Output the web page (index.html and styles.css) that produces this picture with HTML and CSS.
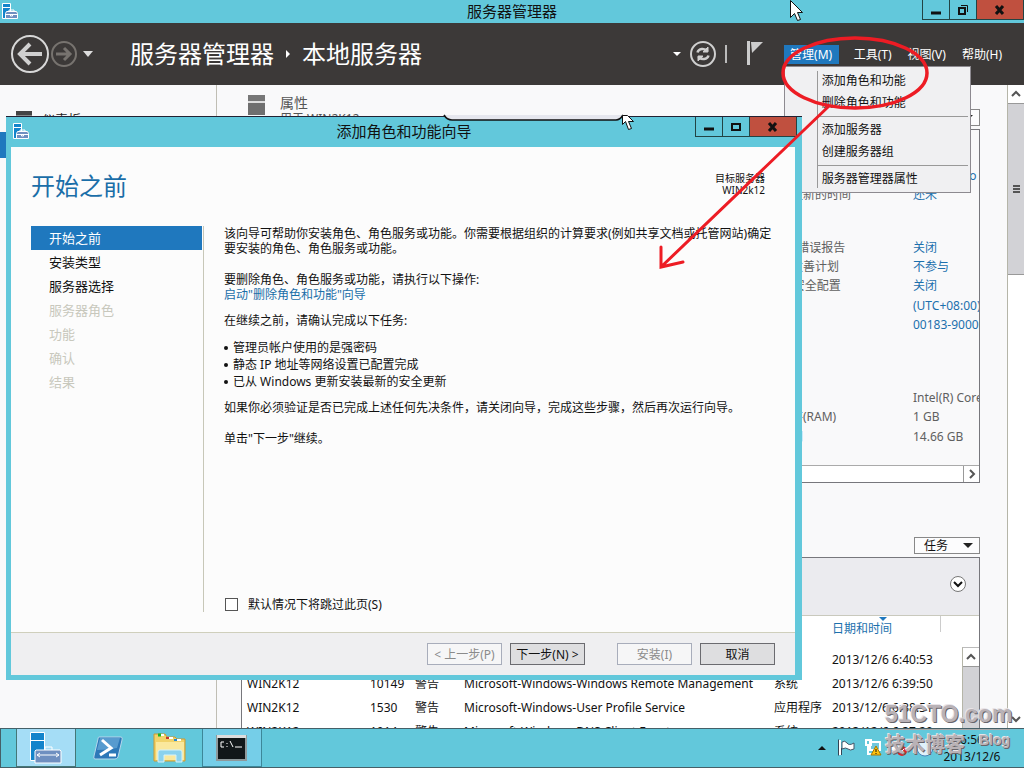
FILE: index.html
```html
<!DOCTYPE html>
<html lang="zh-CN">
<head>
<meta charset="utf-8">
<title>服务器管理器</title>
<link rel="stylesheet" href="styles.css">
</head>
<body>
<svg class="defs" aria-hidden="true">
  <symbol id="server-icon" viewBox="0 0 16 16">
    <path d="M.5.500h8v15h-8z" fill="#1384cb" stroke="#fff"/>
    <path d="M1 4.500h7" stroke="#fff"/>
    <path d="M7 9V7h5v2" fill="none" stroke="#fff"/>
    <path d="M3.500 10.500l1-2h10l1 2v5h-12z" fill="#6f8fc0" stroke="#fff"/>
    <path d="M4 11.500h11M8.500 11v2h2v-2" fill="none" stroke="#fff"/>
  </symbol>
</svg>
<main class="desktop">
  <section class="manager">
    <header class="titlebar">
      <svg class="app-icon"><use href="#server-icon"/></svg>
      <h1 class="window-title">服务器管理器</h1>
      <div class="window-buttons">
        <button class="win-btn" aria-label="最小化"><svg width="12" height="12"><path d="M1 9h10" stroke="#111" stroke-width="3"/></svg></button>
        <button class="win-btn" aria-label="还原"><svg width="12" height="12"><path d="M2 4h6v6H2z" fill="none" stroke="#111" stroke-width="2"/><path d="M4 1.500h6.500V8" fill="none" stroke="#111"/></svg></button>
        <button class="win-btn close" aria-label="关闭"><svg width="12" height="12"><path d="M2 2l7 8M9 2l-7 8" stroke="#111" stroke-width="3"/></svg></button>
      </div>
    </header>
    <div class="banner">
      <button class="nav-btn" aria-label="后退"><svg width="40" height="40"><circle cx="20" cy="20" r="18" fill="none" stroke="#d8d8d8" stroke-width="2"/><path d="M10 20h22M20 10L10 20l10 10" fill="none" stroke="#d0d0d0" stroke-width="4"/></svg></button>
      <button class="nav-btn" aria-label="前进"><svg width="28" height="28"><circle cx="14" cy="14" r="12" fill="none" stroke="#77736f" stroke-width="2"/><path d="M6 14h14M14 8l6 6-6 6" fill="none" stroke="#77736f" stroke-width="3"/></svg></button>
      <button class="nav-btn drop" aria-label="历史记录"><svg width="12" height="8"><path d="M1 1h10L6 7z" fill="#ddd"/></svg></button>
      <nav class="crumbs"><span>服务器管理器</span><svg width="6" height="8"><path d="M1 0l4 4-4 4z" fill="#fff"/></svg><span>本地服务器</span></nav>
      <div class="tools">
        <button class="nav-btn" aria-label="更多"><svg width="8" height="6"><path d="M0 1h8L4 5z" fill="#fff"/></svg></button>
        <button class="nav-btn" aria-label="刷新"><svg width="28" height="28" fill="none" stroke="#cfcfcf"><circle cx="14" cy="14" r="12" stroke-width="2"/><path d="M8.500 12.500c1-4 7-5 10-1M19.500 15.500c-1 4-7 5-10 1" stroke-width="2.500"/><path d="M19 7v5h-5zM9 21v-5h5z" fill="#cfcfcf" stroke-width="1"/></svg></button>
        <span class="tool-line"></span>
        <button class="nav-btn" aria-label="通知"><svg width="18" height="28"><path d="M2.500 1v24" stroke="#ccc" stroke-width="3"/><path d="M5 2h12L6 13z" fill="#ccc"/></svg></button>
      </div>
      <div class="menubar">
        <button class="menu-head open">管理(M)</button>
        <button class="menu-head">工具(T)</button>
        <button class="menu-head">视图(V)</button>
        <button class="menu-head">帮助(H)</button>
        <div class="menu">
          <button class="menu-item">添加角色和功能</button>
          <button class="menu-item">删除角色和功能</button>
          <hr class="menu-sep">
          <button class="menu-item">添加服务器</button>
          <button class="menu-item">创建服务器组</button>
          <hr class="menu-sep">
          <button class="menu-item">服务器管理器属性</button>
        </div>
      </div>
    </div>
    <div class="workspace">
      <nav class="sidebar">
        <a class="side-item" href="#"><span class="side-icon"></span>仪表板</a>
        <a class="side-item selected" href="#"><span class="side-icon"></span>本地服务器</a>
      </nav>
      <div class="page">
        <div class="tile-head">
          <span class="tile-icon"></span>
          <div class="tile-name"><h2>属性</h2><p>用于 WIN2K12</p></div>
          <button class="tasks">任务<span class="caret"></span></button>
        </div>
        <div class="props">
          <dl class="prop-list">
            <div class="prop"><dt>Windows 更新</dt><dd class="link">使用 Windo</dd></div>
            <div class="prop"><dt>上次检查更新的时间</dt><dd class="link">还未</dd></div>
          </dl>
          <dl class="prop-list second">
            <div class="prop"><dt>Windows 错误报告</dt><dd class="link">关闭</dd></div>
            <div class="prop"><dt>客户体验改善计划</dt><dd class="link">不参与</dd></div>
            <div class="prop"><dt>IE 增强的安全配置</dt><dd class="link">关闭</dd></div>
            <div class="prop late"><dt>时区</dt><dd class="link">(UTC+08:00)</dd></div>
            <div class="prop"><dt>产品 ID</dt><dd class="link">00183-90000</dd></div>
          </dl>
          <dl class="prop-list third">
            <div class="prop"><dt>处理器</dt><dd>Intel(R) Core</dd></div>
            <div class="prop"><dt>安装的内存(RAM)</dt><dd>1 GB</dd></div>
            <div class="prop late"><dt>总磁盘空间</dt><dd>14.66 GB</dd></div>
          </dl>
          <div class="hscroll"><button class="scroll-btn" aria-label="向右"><svg width="8" height="10"><path d="M2 1l4 4-4 4" fill="none" stroke="#555" stroke-width="2"/></svg></button></div>
        </div>
        <div class="tile-head events-head"><button class="tasks">任务<span class="caret"></span></button></div>
        <div class="events">
          <div class="filter"><button class="expand" aria-label="展开"><svg width="10" height="8"><path d="M1 2l4 4 4-4" fill="none" stroke="#111" stroke-width="2"/></svg></button></div>
          <div class="event-body">
            <table class="event-table">
              <colgroup><col class="c-name"><col class="c-id"><col class="c-level"><col class="c-source"><col class="c-log"><col class="c-date"><col></colgroup>
              <thead><tr><th></th><th></th><th></th><th></th><th></th><th class="sorted">日期和时间</th><th></th></tr></thead>
              <tbody>
                <tr><td>WIN2K12</td><td>10149</td><td>警告</td><td>Microsoft-Windows-Windows Remote Management</td><td>系统</td><td>2013/12/6 6:40:53</td><td></td></tr>
                <tr><td>WIN2K12</td><td>10149</td><td>警告</td><td>Microsoft-Windows-Windows Remote Management</td><td>系统</td><td>2013/12/6 6:39:50</td><td></td></tr>
                <tr><td>WIN2K12</td><td>1530</td><td>警告</td><td>Microsoft-Windows-User Profile Service</td><td>应用程序</td><td>2013/12/6 6:38:51</td><td></td></tr>
                <tr><td>WIN2K12</td><td>1014</td><td>警告</td><td>Microsoft-Windows-DNS Client Events</td><td>系统</td><td>2013/12/6 6:37:20</td><td></td></tr>
              </tbody>
            </table>
            <div class="vscroll inner"><button class="scroll-btn" aria-label="向上"><svg width="10" height="8"><path d="M1 6l4-4 4 4" fill="none" stroke="#555" stroke-width="2"/></svg></button><div class="thumb"></div></div>
          </div>
        </div>
      </div>
      <div class="vscroll">
        <button class="scroll-btn" aria-label="向上"><svg width="10" height="8"><path d="M1 6l4-4 4 4" fill="none" stroke="#555" stroke-width="2"/></svg></button>
        <div class="thumb grip"><span></span></div>
        <div class="track"></div>
        <button class="scroll-btn" aria-label="向下"><svg width="10" height="8"><path d="M1 2l4 4 4-4" fill="none" stroke="#555" stroke-width="2"/></svg></button>
      </div>
    </div>
  </section>

  <footer class="taskbar">
    <button class="task active" aria-label="服务器管理器"><svg width="36" height="34"><g stroke="#fff"><path d="M2.500 1.500h14v28h-14z" fill="#1384cb"/><path d="M2.500 9.500h14" fill="none"/><path d="M17 19v-3h7v3" fill="none"/><path d="M8 19h24l1 1v12H7V20z" fill="#6f8fc0"/><path d="M9 24h22M12 22l-3 2 3 2M28 22l3 2-3 2" fill="none"/></g></svg></button>
    <button class="task" aria-label="PowerShell"><svg width="30" height="26"><path d="M6 2h22q2 0 1 3l-4 17q-1 2-3 2H2q-2 0-1-3L5 4q0-2 1-2z" fill="#2d78b8" stroke="#b7d7ec"/><path d="M7 3h20l-3 10q-9 2-20 2z" fill="#69aad9" opacity=".7"/><path d="M9 5l9 8L7 20M16 20h7" fill="none" stroke="#fff" stroke-width="3"/></svg></button>
    <button class="task" aria-label="文件资源管理器"><svg width="34" height="30"><path d="M1 5V1h11l2 3h8l2 2h8v22H1z" fill="#f1d36a" stroke="#c99a35"/><path d="M5 2h6M13 5h7M21 7h7" stroke="#fff" stroke-width="2"/><path d="M5 2h3" stroke="#17b52a" stroke-width="3"/><path d="M13 5h3" stroke="#c6372b" stroke-width="2"/><path d="M21 7h3" stroke="#2788d0" stroke-width="2"/><path d="M3 9h28v18H3z" fill="#fae89d"/><path d="M5 29V19q0-2 2-2h20q2 0 2 2v10h-6v-7H11v7z" fill="#8bd2ed" stroke="#d5f2fa"/></svg></button>
    <button class="task running" aria-label="命令提示符"><svg width="32" height="28"><path d="M1 2h29v24H1z" fill="#111719" stroke="#8e999b" stroke-width="2"/><path d="M1 2.500h29" stroke="#ddd" stroke-width="3"/><path d="M8 8H5v5h3M11 9v1M11 12v1M14 7l3 6M19 13h7" fill="none" stroke="#fff"/></svg></button>
    <div class="tray">
      <svg width="8" height="6"><path d="M0 5h8L4 1z" fill="#111"/></svg>
      <svg width="18" height="18"><path d="M2 1v15" stroke="#fff" stroke-width="2"/><path d="M.5.500v16M3.500 9v7" stroke="#345"/><path d="M4 3q3-2 5 1t7 0v6q-4 2-6 0t-6 0z" fill="#fff" stroke="#456" stroke-width="1"/></svg>
      <svg width="18" height="18"><path d="M6 3h10v8H6z" fill="#6fc7dd" stroke="#fff" stroke-width="2"/><path d="M2 1h5v5H2zM4 6v9h8" fill="none" stroke="#fff" stroke-width="2"/><path d="M12 7l5 9H7z" fill="#ffc20e" stroke="#a77700"/><path d="M12 10v3M12 14v1" stroke="#111"/></svg>
      <svg width="18" height="18"><path d="M1 6h4l5-4v13l-5-4H1z" fill="#fff"/><circle cx="12" cy="12" r="5" fill="#d72727"/><path d="M10 10l4 4M14 10l-4 4" stroke="#fff"/></svg>
      <svg width="18" height="18"><circle cx="9" cy="9" r="8" fill="#dff1fa" stroke="#4784b8"/></svg>
      <time class="clock"><span>6:56</span><span>2013/12/6</span></time>
    </div>
  </footer>

  <section class="wizard" role="dialog" aria-labelledby="wizard-title">
    <header class="wizard-bar">
      <svg class="app-icon"><use href="#server-icon"/></svg>
      <h2 class="window-title" id="wizard-title">添加角色和功能向导</h2>
      <div class="window-buttons">
        <button class="win-btn" aria-label="最小化"><svg width="12" height="12"><path d="M1 8h10" stroke="#111" stroke-width="3"/></svg></button>
        <button class="win-btn" aria-label="最大化"><svg width="12" height="12"><path d="M2 3h8v6H2z" fill="none" stroke="#111" stroke-width="2"/></svg></button>
        <button class="win-btn close" aria-label="关闭"><svg width="12" height="12"><path d="M2 2l7 8M9 2l-7 8" stroke="#111" stroke-width="3"/></svg></button>
      </div>
    </header>
    <div class="wizard-main">
      <div class="wizard-head"><h3>开始之前</h3><p>目标服务器<br>WIN2k12</p></div>
      <div class="wizard-body">
        <ol class="steps">
          <li class="step current">开始之前</li><li class="step">安装类型</li><li class="step">服务器选择</li><li class="step off">服务器角色</li><li class="step off">功能</li><li class="step off">确认</li><li class="step off">结果</li>
        </ol>
        <div class="intro">
          <p>该向导可帮助你安装角色、角色服务或功能。你需要根据组织的计算要求(例如共享文档或托管网站)确定<br>要安装的角色、角色服务或功能。</p>
          <p class="near">要删除角色、角色服务或功能，请执行以下操作:<br><a href="#">启动"删除角色和功能"向导</a></p>
          <p class="near">在继续之前，请确认完成以下任务:</p>
          <ul><li>管理员帐户使用的是强密码</li><li>静态 IP 地址等网络设置已配置完成</li><li>已从 Windows 更新安装最新的安全更新</li></ul>
          <p>如果你必须验证是否已完成上述任何先决条件，请关闭向导，完成这些步骤，然后再次运行向导。</p>
          <p>单击"下一步"继续。</p>
          <label class="skip"><input type="checkbox">默认情况下将跳过此页(S)</label>
        </div>
      </div>
      <div class="wizard-foot">
        <button class="btn" disabled>&lt; 上一步(P)</button>
        <button class="btn">下一步(N) &gt;</button>
        <button class="btn apart" disabled>安装(I)</button>
        <button class="btn">取消</button>
      </div>
    </div>
  </section>

  <svg class="marks" width="1024" height="768" viewBox="0 0 1024 768" aria-hidden="true">
    <path d="M444 115q3 5 8 5h164q4 0 7-5z" fill="#e6e7ee"/>
    <path d="M444 115q3 5 8 5h164q4 0 7-5" fill="none" stroke="#111" stroke-width="1.500"/>
    <g fill="#fff" stroke="#111"><path d="M790.500.500v17l4-4 3 7 3-1-3-7h5z"/><path d="M622.500 115.500v9l3-3 3 8 3-1-3-7h5l-6-6z"/></g>
    <g fill="none" stroke="#ed1c24" stroke-width="3.500"><ellipse cx="855" cy="73" rx="72" ry="35"/><path d="M828 107L661 267M661 247v20l22-5" stroke-linecap="round" stroke-width="3"/></g>
  </svg>
  <div class="watermark" aria-hidden="true"><span class="mark-site">51CTO.com</span><span class="mark-row"><span>技术博客</span><span class="mark-blog">Blog</span></span></div>
</main>
</body>
</html>
```
FILE: styles.css
```css
* { box-sizing: border-box; margin: 0; padding: 0; }
body { font: 12px/15px "Noto Sans", "Noto Sans CJK SC", sans-serif; color: #111; }
button { font: inherit; color: inherit; border: 0; background: none; }
h1, h2, h3 { font-weight: 400; }
a { color: #1a6ea8; text-decoration: none; }
ol, ul { list-style: none; }
svg { display: block; flex: none; }
.defs { position: absolute; width: 0; height: 0; }
.desktop { position: relative; height: 100vh; overflow: hidden; display: flex; flex-direction: column; background: #62c8db; }
.manager { flex: 1; min-height: 0; display: flex; flex-direction: column; }

.titlebar, .wizard-bar { display: grid; grid-template-columns: 1fr auto 1fr; align-items: start; background: #62c8db; }
.titlebar { height: 23px; }
.app-icon { width: 16px; height: 16px; margin: 3px 2px; }
.window-title { font-size: 15px; line-height: 23px; }
.window-buttons { display: flex; justify-self: end; border: 1px solid #244; border-top: 0; }
.win-btn { display: flex; align-items: center; justify-content: center; width: 27px; height: 19px; border-right: 1px solid #244; }
.win-btn.close { width: 46px; background: #c0503f; border-right: 0; }

.banner { height: 62px; display: flex; align-items: center; padding: 0 17px 0 10px; background: #3c3938; color: #fff; }
.nav-btn { flex: none; display: flex; }
.drop { margin-left: 4px; }
.crumbs { flex: 1; display: flex; align-items: center; gap: 11px; margin-left: 36px; font-size: 24px; line-height: 32px; white-space: nowrap; }
.tools { display: flex; align-items: center; gap: 8px; margin-right: 20px; }
.tool-line { width: 2px; height: 18px; background: #bbb; }
.tools .nav-btn:last-child { margin-left: 11px; }
.menubar { position: relative; display: flex; gap: 6px; }
.menu-head { height: 19px; padding: 0 5px; white-space: nowrap; }
.menu-head.open { width: 55px; margin-right: 4px; background: #1f78be; }
.menu { position: absolute; top: 21px; left: 0; width: 187px; padding: 3px 2px 2px; background: #f0f0f2; border: 1px solid #8d8a90; color: #111; z-index: 1; }
.menu::before { content: ""; position: absolute; left: 32px; top: 4px; bottom: 4px; border-left: 1px solid #999; }
.menu-item { display: block; width: 100%; height: 22px; padding-left: 35px; text-align: left; }
.menu-sep { height: 1px; margin: 2px 0 2px 30px; border: 0; background: #999; }

.workspace { flex: 1; min-height: 0; display: flex; background: #f9f9fa; }
.sidebar { flex: none; width: 217px; padding-top: 21px; border-right: 1px solid #c0beb4; }
.side-item { display: flex; align-items: center; gap: 10px; height: 26px; padding-left: 16px; font-size: 13px; color: #222; }
.side-item.selected { background: #1f78be; color: #fff; }
.side-icon { width: 16px; height: 16px; border-top: 4px solid #444; background: #888; }
.page { flex: 1; min-width: 0; display: flex; flex-direction: column; padding: 0 27px 0 24px; }
.tile-head { flex: none; display: flex; height: 44px; padding: 9px 0 3px 7px; }
.tile-icon { width: 17px; height: 20px; margin-top: 1px; border-top: 6px solid #777; background: linear-gradient(#ddd 2px, #6f6f6f 2px); }
.tile-name { flex: 1; padding-left: 15px; color: #555; }
.tile-name h2 { font-size: 14px; line-height: 17px; }
.tasks { align-self: flex-end; display: flex; align-items: center; justify-content: space-between; width: 66px; height: 17px; padding: 0 6px 0 9px; border: 1px solid #888; background: #fcfcfd; }
.caret { border: 5px solid transparent; border-top-color: #222; border-bottom: 0; }
.props { flex: none; height: 354px; display: flex; flex-direction: column; padding-top: 36px; border: 1px solid #77777c; overflow: hidden; }
.prop-list { color: #606060; }
.prop-list.second { margin-top: 34px; }
.prop-list.third { margin-top: 54px; }
.prop { display: grid; grid-template-columns: 170px 66px; justify-content: end; line-height: 19px; white-space: nowrap; }
.prop.late { padding-top: 1px; }
.link { color: #1c70ad; }
.hscroll { height: 17px; margin-top: auto; display: flex; justify-content: flex-end; border-top: 1px solid #aaa; background: #fff; }
.scroll-btn { flex: none; display: flex; align-items: center; justify-content: center; width: 16px; height: 16px; background: #fff; }
.hscroll .scroll-btn { border-left: 1px solid #999; }
.events-head { height: 74px; justify-content: flex-end; }
.events { flex: 1; min-height: 0; display: flex; flex-direction: column; border: 1px solid #77777c; border-bottom: 0; background: #fff; }
.filter { flex: none; display: flex; align-items: center; justify-content: flex-end; height: 58px; padding: 0 13px 5px 0; background: #ebebef; border-bottom: 1px solid #c9c9bd; }
.expand { display: flex; align-items: center; justify-content: center; width: 16px; height: 16px; border: 1px solid #777; border-radius: 50%; background: #fff; }
.event-body { flex: 1; min-height: 0; display: flex; overflow: hidden; }
.event-table { flex: 1; min-width: 0; table-layout: fixed; border-collapse: collapse; align-self: flex-start; }
.event-table th { height: 31px; padding-bottom: 11px; font-weight: 400; text-align: left; white-space: nowrap; }
.event-table th.sorted { color: #1c70ad; background: linear-gradient(#ccc, #ccc) 108px 0 / 1px 16px no-repeat; }
.sorted::before { content: ""; display: block; width: 0; height: 0; margin-left: 47px; border: 4px solid transparent; border-top-color: #1f78be; border-bottom: 0; }
.event-table td { height: 24px; white-space: nowrap; }
.event-table td:first-child { padding-left: 5px; }
.c-name { width: 128px; } .c-id { width: 45px; } .c-level { width: 49px; } .c-source { width: 310px; } .c-log { width: 58px; } .c-date { width: 120px; }
.vscroll { flex: none; width: 17px; display: flex; flex-direction: column; border-left: 1px solid #b5b5a8; background: #fff; }
.vscroll .scroll-btn { height: 18px; }
.vscroll.inner { margin-top: 31px; border-top: 1px solid #bbb; }
.thumb { flex: 1; background: #d2d2d6; border-top: 1px solid #999; }
.thumb.grip { flex: 0 0 172px; display: flex; align-items: center; justify-content: center; border-bottom: 1px solid #999; }
.grip span { width: 7px; height: 8px; background: repeating-linear-gradient(#555 0 2px, transparent 2px 3px); }
.track { flex: 1; }

.taskbar { flex: none; height: 40px; display: flex; gap: 2px; padding: 0 22px 0 15px; border: 1px solid #456068; border-right: 0; background: #62c8db; }
.task { display: flex; align-items: center; justify-content: center; width: 60px; height: 38px; }
.task.active { background: #a5ddf6; border: 1px solid #477; border-top: 0; }
.task.running { background: #75cee8; border: 1px solid #3c8799; border-top: 0; }
.tray { margin-left: auto; display: flex; align-items: center; gap: 8px; }
.clock { display: flex; flex-direction: column; width: 60px; text-align: center; line-height: 17px; }
.tray svg:first-child { margin-right: 4px; }

.wizard { position: absolute; left: 6px; right: 222px; top: 116px; bottom: 88px; display: flex; flex-direction: column; padding: 0 7px 5px 5px; border-top: 1px solid #223; background: #62c8db; z-index: 2; }
.wizard-bar { height: 30px; margin-right: -2px; }
.wizard-bar .window-title { line-height: 29px; }
.wizard-bar .app-icon { margin-top: 6px; }
.wizard-main { flex: 1; min-height: 0; display: flex; flex-direction: column; background: #fcfcfc; }
.wizard-head { display: flex; justify-content: space-between; height: 79px; padding: 23px 30px 0 20px; }
.wizard-head h3 { font-size: 24px; line-height: 32px; color: #1a6ea8; }
.wizard-head p { padding-top: 2px; font-size: 10px; line-height: 12px; text-align: right; }
.wizard-body { flex: 1; min-height: 0; display: flex; padding: 0 20px 20px; }
.steps { flex: none; width: 173px; padding-right: 1px; border-right: 1px solid #c7c7b8; }
.step { height: 24px; padding-left: 18px; font-size: 13px; line-height: 24px; }
.step.current { background: #1f78be; color: #fff; }
.step.off { color: #c8c8bd; }
.intro { flex: 1; min-width: 0; display: flex; flex-direction: column; padding-left: 20px; white-space: nowrap; }
.intro p { margin-bottom: 16px; }
.intro p.near { margin-bottom: 11px; }
.intro ul { margin-bottom: 10px; line-height: 17px; }
.intro li { display: flex; align-items: center; gap: 5px; }
.intro li::before { content: ""; width: 4px; height: 4px; border-radius: 50%; background: #111; }
.skip { display: flex; align-items: center; gap: 10px; margin-top: auto; padding-left: 1px; }
.skip input { appearance: none; width: 13px; height: 13px; border: 1px solid #555; background: #fff; }
.wizard-foot { flex: none; display: flex; justify-content: flex-end; align-items: center; gap: 8px; height: 43px; padding-right: 20px; border-top: 1px solid #cfcfbc; background: #efeff1; }
.btn { width: 75px; height: 22px; border: 1px solid #6b6b70; background: #dedee0; white-space: nowrap; }
.btn:disabled { border-color: #a8adbb; background: #f6f6f7; color: #8b8b8b; }
.btn.apart { margin-left: 24px; }

.marks { position: absolute; left: 0; top: 0; z-index: 3; pointer-events: none; }
.watermark { position: absolute; right: 14px; bottom: 8px; z-index: 4; width: 125px; display: flex; flex-direction: column; color: #b9b2b6; font-family: "Liberation Sans", "Noto Sans CJK SC", sans-serif; font-weight: 700; text-shadow: 1px 1px #68656b, -1px -1px #e8e4e8; white-space: nowrap; pointer-events: none; }
.mark-site { font-size: 23px; line-height: 30px; border-bottom: 1px solid #aaa; }
.mark-row { display: flex; justify-content: space-between; font-size: 20px; line-height: 30px; }
.mark-blog { font-size: 14px; line-height: 20px; }
```
